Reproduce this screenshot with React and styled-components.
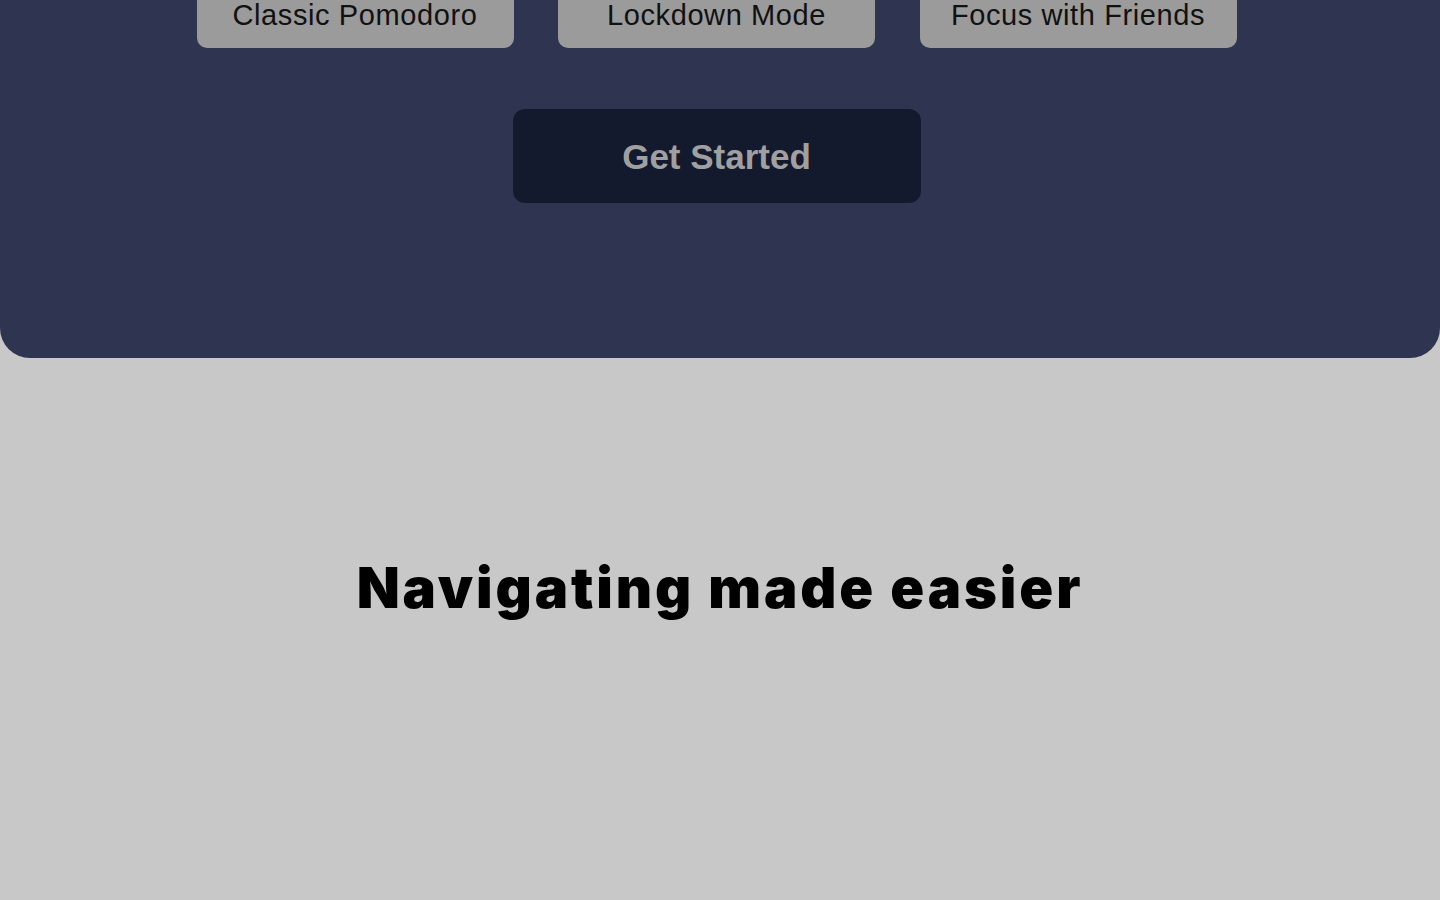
import React from "react";
import styled, { createGlobalStyle } from "styled-components";

const Global = createGlobalStyle`
  html, body { margin: 0; padding: 0; background: #c8c8c8; }
  body { font-family: "Liberation Sans", Arial, sans-serif; overflow: hidden; }
`;

const Page = styled.div`
  width: 1440px;
  height: 900px;
  overflow: hidden;
  background: #c8c8c8;
  display: flex;
  flex-direction: column;
`;

const Hero = styled.section`
  background: #2f3550;
  border-radius: 0 0 30px 30px;
  margin-top: -40px;
  padding: 0 7px 155px 0;
  display: flex;
  flex-direction: column;
  align-items: center;
`;

const ModeRow = styled.div`
  display: flex;
  gap: 44.5px;
  justify-content: center;
`;

const ModeButton = styled.button`
  width: 317px;
  height: 88px;
  border: none;
  border-radius: 10px;
  background: #9b9b9b;
  color: #111;
  font-family: "Liberation Sans", Arial, sans-serif;
  font-size: 29px;
  letter-spacing: 0.6px;
  padding: 23px 0 0;
  cursor: pointer;
`;

const StartButton = styled.button`
  margin-top: 61px;
  width: 408px;
  height: 94px;
  border: none;
  border-radius: 12px;
  background: #141a2d;
  color: #a0a0a0;
  font-family: "Liberation Sans", Arial, sans-serif;
  font-weight: 700;
  font-size: 35px;
  padding-top: 2px;
  cursor: pointer;
`;

const Section = styled.section`
  flex: 1;
  display: flex;
  justify-content: center;
  padding-top: 196px;
`;

const Heading = styled.h2`
  margin: 0;
  font-family: Inter, "Noto Sans", sans-serif;
  font-weight: 900;
  font-size: 56px;
  line-height: 68px;
  letter-spacing: 2.9px;
  color: #000;
`;

export default function App() {
  return (
    <Page>
      <Global />
      <Hero>
        <ModeRow>
          <ModeButton>Classic Pomodoro</ModeButton>
          <ModeButton>Lockdown Mode</ModeButton>
          <ModeButton>Focus with Friends</ModeButton>
        </ModeRow>
        <StartButton>Get Started</StartButton>
      </Hero>
      <Section>
        <Heading>Navigating made easier</Heading>
      </Section>
    </Page>
  );
}
